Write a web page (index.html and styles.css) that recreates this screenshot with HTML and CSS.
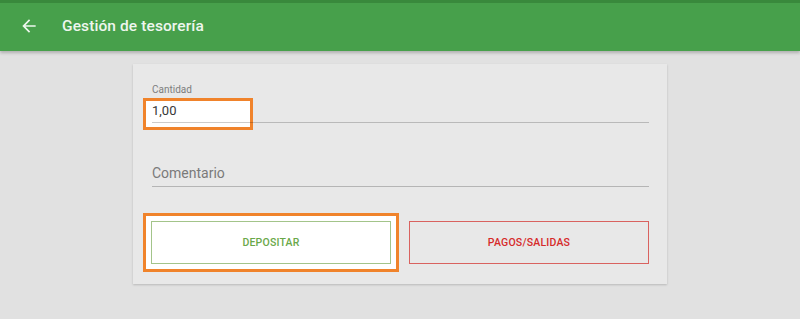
FILE: index.html
```html
<!DOCTYPE html>
<html lang="es">
<head>
<meta charset="utf-8">
<title>Gestión de tesorería</title>
<link rel="stylesheet" href="styles.css">
</head>
<body>
<header class="appbar">
  <div class="statusbar"></div>
  <div class="toolbar">
    <button class="back" aria-label="Atrás">
      <svg width="20" height="20" viewBox="0 0 24 24"><path d="M20 11H7.83l5.59-5.59L12 4l-8 8 8 8 1.41-1.41L7.83 13H20v-2z" fill="currentColor"/></svg>
    </button>
    <h1 class="title">Gestión de tesorería</h1>
  </div>
</header>
<main class="page">
  <section class="card">
    <div class="field field-amount">
      <span class="highlight"></span>
      <label class="label">Cantidad</label>
      <div class="value">1,00</div>
    </div>
    <div class="field field-comment">
      <div class="placeholder">Comentario</div>
    </div>
    <div class="actions">
      <button class="btn btn-deposit">DEPOSITAR</button>
      <button class="btn btn-pay">PAGOS/SALIDAS</button>
    </div>
  </section>
</main>
</body>
</html>
```

FILE: styles.css
```css
* { box-sizing: border-box; }
html, body { margin: 0; padding: 0; }
body {
  background: #e1e1e1;
  font-family: Roboto, "Liberation Sans", sans-serif;
  width: 800px;
  height: 319px;
  overflow: hidden;
}
.appbar {
  position: relative;
  z-index: 2;
  box-shadow: 0 2px 3px rgba(0,0,0,0.22);
}
.statusbar {
  height: 3px;
  background: #39893c;
}
.toolbar {
  height: 48px;
  background: #47a04b;
  display: flex;
  align-items: center;
}
.back {
  border: 0;
  background: none;
  padding: 0;
  margin: -2px 0 0 19px;
  width: 20px;
  height: 20px;
  color: #eef6ee;
  display: flex;
}
.title {
  margin: -2px 0 0 23px;
  font-size: 15.5px;
  font-weight: 500;
  color: #eef6ee;
  letter-spacing: 0.1px;
}
.page {
  padding-top: 13px;
  display: flex;
  justify-content: center;
}
.card {
  width: 534px;
  background: #e8e8e8;
  box-shadow: 0 1px 2px rgba(0,0,0,0.18);
  padding: 20px 18px 20px 18px;
}
.field {
  position: relative;
  margin: 0 0 0 1px;
}
.highlight {
  position: absolute;
  left: -9px;
  top: 14px;
  width: 110px;
  height: 32px;
  border: 3px solid #f0832b;
  background: #fff;
  z-index: 0;
}
.label {
  position: relative;
  z-index: 1;
  display: block;
  font-size: 10px;
  line-height: 12px;
  color: #7d7d7d;
  margin-bottom: 7px;
}
.value {
  position: relative;
  z-index: 1;
  font-size: 13px;
  line-height: 16px;
  color: #383838;
  padding-bottom: 3px;
  border-bottom: 1px solid rgba(0,0,0,0.2);
}
.field-comment {
  margin-top: 42px;
}
.placeholder {
  font-size: 14px;
  line-height: 17px;
  color: #7a7a7a;
  padding-bottom: 4px;
  border-bottom: 1px solid rgba(0,0,0,0.22);
}
.actions {
  margin-top: 34px;
  display: flex;
  gap: 18px;
}
.btn {
  width: 240px;
  height: 43px;
  font-family: Roboto, "Liberation Sans", sans-serif;
  font-size: 10.5px;
  font-weight: 500;
  letter-spacing: 0.2px;
  border-radius: 0;
  padding: 0;
}
.btn-deposit {
  background: #fff;
  border: 1px solid #a3c48a;
  color: #6aa84a;
  box-shadow: 0 0 0 5px #fff, 0 0 0 8px #f0832b;
}
.btn-pay {
  background: transparent;
  border: 1px solid #d9625f;
  color: #d62a2a;
}
```
